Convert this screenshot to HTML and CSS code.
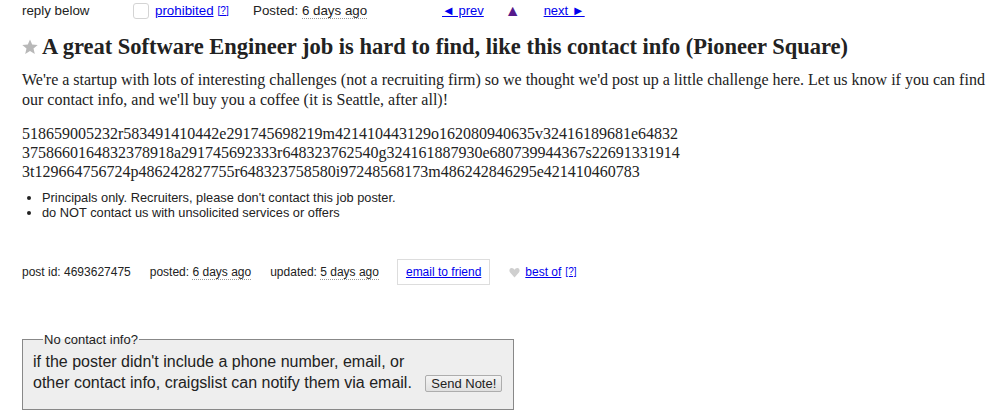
FILE: index.html
```html
<!DOCTYPE html>
<html>
<head>
<meta charset="utf-8">
<link rel="stylesheet" href="styles.css">
</head>
<body>
<div class="page">
  <div class="topbar">
    <span class="reply">reply below</span>
    <span class="flag"><span class="checkbox"></span><a href="#" class="lnk">prohibited</a><sup class="help"><a href="#" class="lnk">[?]</a></sup></span>
    <span class="posted">Posted: <span class="dotted">6 days ago</span></span>
    <span class="nav">
      <a href="#" class="lnk">◄ prev</a>
      <a href="#" class="up">▲</a>
      <a href="#" class="lnk">next ►</a>
    </span>
  </div>

  <h2 class="title"><svg class="star" width="16" height="16" viewBox="0 0 16 16"><polygon points="8,0.5 10.2,5.6 15.7,6 11.5,9.6 12.8,15 8,12.1 3.2,15 4.5,9.6 0.3,6 5.8,5.6" fill="#b8b8b8"/></svg>A great Software Engineer job is hard to find, like this contact info (Pioneer Square)</h2>

  <section class="body">
    <p class="intro">We're a startup with lots of interesting challenges (not a recruiting firm) so we thought we'd post up a little challenge here. Let us know if you can find our contact info, and we'll buy you a coffee (it is Seattle, after all)!</p>
    <p class="code">518659005232r583491410442e291745698219m421410443129o162080940635v32416189681e64832<br>3758660164832378918a291745692333r648323762540g324161887930e680739944367s22691331914<br>3t129664756724p486242827755r648323758580i97248568173m486242846295e421410460783</p>
  </section>

  <ul class="notices">
    <li>Principals only. Recruiters, please don't contact this job poster.</li>
    <li>do NOT contact us with unsolicited services or offers</li>
  </ul>

  <div class="postinfo">
    <span>post id: 4693627475</span>
    <span>posted: <span class="dotted">6 days ago</span></span>
    <span>updated: <span class="dotted">5 days ago</span></span>
    <a href="#" class="lnk emailbox">email to friend</a>
    <span class="bestof"><svg class="heart" width="11" height="11" viewBox="0 0 12 12"><path d="M6 11.5 L1.2 6 C-0.2 4.3 0.3 1.2 2.8 1 C4.3 0.9 5.4 1.9 6 3 C6.6 1.9 7.7 0.9 9.2 1 C11.7 1.2 12.2 4.3 10.8 6 Z" fill="#cfcfcf"/></svg><a href="#" class="lnk">best of</a><sup class="help"><a href="#" class="lnk">[?]</a></sup></span>
  </div>

  <fieldset class="notify">
    <legend>No contact info?</legend>
    <div class="notetext">if the poster didn't include a phone number, email, or<br>other contact info, craigslist can notify them via email. <button class="send">Send Note!</button></div>
  </fieldset>
</div>
</body>
</html>
```
FILE: styles.css
```css
html, body {
  margin: 0;
  padding: 0;
  background: #fff;
}
body {
  font-family: "Liberation Sans", Arial, sans-serif;
  color: #222;
}
.page {
  padding: 0 22px;
}
.lnk {
  color: #0000ee;
  text-decoration: underline;
}
.topbar {
  display: flex;
  align-items: center;
  height: 21px;
  font-size: 13.33px;
  white-space: nowrap;
}
.reply {
  width: 111px;
}
.flag {
  display: flex;
  align-items: center;
  width: 120px;
}
.checkbox {
  display: inline-block;
  width: 14px;
  height: 14px;
  border: 1px solid #d4d4d4;
  border-radius: 3px;
  margin-right: 6px;
  background: #fff;
}
.help {
  font-size: 10px;
  margin-left: 4px;
  vertical-align: 6px;
  line-height: 0;
}
.dotted {
  border-bottom: 1px dotted #999;
}
.posted {
  width: 189px;
}
.nav {
  display: flex;
  align-items: center;
  font-size: 13px;
}
.up {
  color: #551a8b;
  text-decoration: none;
  margin: 0 23px 0 21px;
  font-size: 16px;
  line-height: 16px;
}
.title {
  font-family: "Liberation Serif", "Times New Roman", serif;
  font-weight: bold;
  font-size: 22.5px;
  margin: 13px 0 0 0;
  line-height: 26px;
  color: #222;
  display: flex;
  align-items: center;
}
.star {
  margin-right: 4px;
}
.body {
  font-family: "Liberation Serif", "Times New Roman", serif;
  font-size: 16px;
  line-height: 20px;
  margin-top: 10px;
}
.body p {
  margin: 0;
}
.body .intro {
  margin-bottom: 14px;
}
.body .code {
  line-height: 19px;
}
.notices {
  font-size: 12.8px;
  line-height: 15px;
  margin: 9px 0 0 0;
  padding-left: 20px;
}
.postinfo {
  display: flex;
  align-items: center;
  gap: 19px;
  font-size: 12px;
  margin-top: 39px;
  white-space: nowrap;
}
.emailbox {
  border: 1px solid #ddd;
  padding: 5px 8px;
  margin-left: -1px;
}
.bestof {
  display: flex;
  align-items: center;
}
.heart {
  margin-right: 5px;
}
.notify {
  margin: 44px 0 0 0;
  width: 470px;
  border: 1px solid #888;
  background: #eee;
  padding: 1px 10px 16px 10px;
  font-size: 16px;
  line-height: 21px;
}
.notify legend {
  font-size: 13px;
  padding: 0 1px;
  margin-left: 10px;
}
.notetext {
  white-space: nowrap;
}
.send {
  font-family: "Liberation Sans", Arial, sans-serif;
  font-size: 13px;
  line-height: 15px;
  padding: 0 5px;
  border: 1px solid #adadad;
  border-radius: 2px;
  background: linear-gradient(#f4f4f4, #e0e0e0);
  color: #222;
  margin-left: 9px;
}
```
